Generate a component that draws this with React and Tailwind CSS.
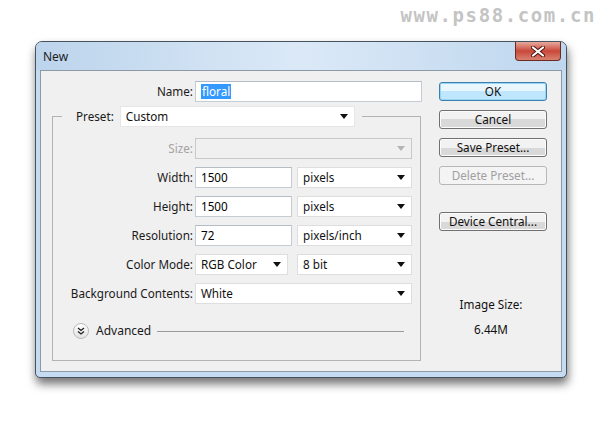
import React from 'react'

const FONT = "font-['Noto_Sans','Liberation_Sans',sans-serif]"

function Arrow({ disabled }) {
  return (
    <svg width="8" height="5" viewBox="0 0 8 5" aria-hidden>
      <path d="M0 0h8L4 5z" fill={disabled ? '#b4b4b4' : '#111'} />
    </svg>
  )
}

function Select({ value, className = '', disabled }) {
  return (
    <div
      className={[
        'flex h-[21px] items-center justify-between pl-[5px] pr-[6px]',
        disabled ? 'border border-[#c9c9c9] bg-[#f0f0f0]' : 'border border-[#dedede] bg-white',
        className,
      ].join(' ')}
    >
      <span className="text-[#111]">{value}</span>
      <Arrow disabled={disabled} />
    </div>
  )
}

function TextBox({ value, className = '' }) {
  return (
    <div
      className={[
        'flex h-[21px] items-center border border-[#c6ccd3] border-t-[#b5bcc5] bg-white pl-[5px]',
        className,
      ].join(' ')}
    >
      {value}
    </div>
  )
}

function Row({ label, disabled, children }) {
  return (
    <div className="flex h-[21px] items-center">
      <span
        className={[
          'mr-[2px] w-[140px] text-right',
          disabled ? 'text-[#a3a3a3]' : 'text-[#1a1a1a]',
        ].join(' ')}
      >
        {label}
      </span>
      {children}
    </div>
  )
}

function Button({ children, primary, disabled, className = '' }) {
  return (
    <div
      className={[
        'flex h-[19px] w-[108px] items-center justify-center rounded-[3px] border',
        primary
          ? 'border-[#3c7fb1] bg-gradient-to-b from-[#eaf6fd] from-50% to-[#bee6fd] to-50% shadow-[inset_0_0_0_1px_#97d5f3]'
          : disabled
            ? 'border-[#b5b8bb] bg-[#f4f4f4] text-[#a0a0a0]'
            : 'border-[#707070] bg-gradient-to-b from-[#f2f2f2] from-50% to-[#d9d9d9] to-50% shadow-[inset_0_0_0_1px_#fcfcfc]',
        className,
      ].join(' ')}
    >
      {children}
    </div>
  )
}

export default function App() {
  return (
    <div className={`h-[428px] w-[600px] overflow-hidden bg-white text-[11.7px] ${FONT}`}>
      <div className="flex h-[41px] justify-end pr-[4px] pt-[5px]">
        <span className="font-['DejaVu_Sans_Mono',monospace] text-[19px] font-bold leading-[20px] tracking-[1.6px] text-[#c4c4c4]">
          www.ps88.com.cn
        </span>
      </div>

      <div className="ml-[35px] flex h-[337px] w-[532px] flex-col rounded-t-[7px] rounded-b-[5px] border border-[#46525e] bg-[#c4dbf1] shadow-[1px_6px_10px_rgba(0,0,0,0.55)]">
        <div className="flex h-[28px] items-start justify-between rounded-t-[6px] bg-gradient-to-r from-[#bcd4ec] via-[#dbe9f7] to-[#bed6ee]">
          <span className="pl-[7px] pt-[6px] text-[12px] text-[#1e1e1e]">New</span>
          <div className="mr-[5px] flex h-[19px] w-[46px] items-center justify-center rounded-b-[4px] border border-t-0 border-[#6b2a22] bg-gradient-to-b from-[#e5a99d] via-[#c8473a] to-[#d8806f]">
            <svg width="14" height="11" viewBox="0 0 14 11" aria-hidden>
              <path d="M2 1.5l10 8M12 1.5l-10 8" stroke="#4a1510" strokeWidth="4" strokeLinecap="round" />
              <path d="M2 1.5l10 8M12 1.5l-10 8" stroke="#fff" strokeWidth="2.2" strokeLinecap="round" />
            </svg>
          </div>
        </div>

        <div className="mx-[4px] flex h-[302px] border border-[#8c9aa8] bg-[#f0f0f0]">
          <div className="flex w-[382px] flex-col pt-[10px]">
            <div className="flex h-[21px] items-center">
              <span className="mr-[2px] w-[152px] text-right text-[#1a1a1a]">Name:</span>
              <TextBox className="w-[227px]" value={<span className="bg-[#3399ff] px-px leading-[15px] text-white">floral</span>} />
            </div>

            <fieldset className="ml-[11px] mt-[4px] w-[369px] border border-[#b3b3b3] pt-[11px] pb-[21px]">
              <legend className="ml-[9px] flex h-[21px] items-center pl-[14px] pr-[7px]">
                <span className="mr-[6px] text-[#1a1a1a]">Preset:</span>
                <Select value="Custom" className="w-[235px] border-[#e6e6e6]" />
              </legend>

              <div className="flex flex-col gap-[8px]">
                <Row label="Size:" disabled>
                  <Select value="" disabled className="w-[217px]" />
                </Row>
                <Row label="Width:">
                  <TextBox className="w-[97px]" value="1500" />
                  <Select value="pixels" className="ml-[5px] w-[115px]" />
                </Row>
                <Row label="Height:">
                  <TextBox className="w-[97px]" value="1500" />
                  <Select value="pixels" className="ml-[5px] w-[115px]" />
                </Row>
                <Row label="Resolution:">
                  <TextBox className="w-[97px]" value="72" />
                  <Select value="pixels/inch" className="ml-[5px] w-[115px]" />
                </Row>
                <Row label="Color Mode:">
                  <Select value="RGB Color" className="w-[93px]" />
                  <Select value="8 bit" className="ml-[9px] w-[115px]" />
                </Row>
                <Row label="Background Contents:">
                  <Select value="White" className="w-[217px]" />
                </Row>
              </div>

              <div className="ml-[20px] mr-[16px] mt-[19px] flex h-[16px] items-center">
                <div className="flex h-[16px] w-[16px] items-center justify-center rounded-full border border-[#b9b9b9] bg-gradient-to-b from-white to-[#e2e2e2]">
                  <svg width="8" height="8" viewBox="0 0 8 8" aria-hidden>
                    <path d="M1 1l3 2.5L7 1M1 4.5L4 7l3-2.5" fill="none" stroke="#222" strokeWidth="1.3" />
                  </svg>
                </div>
                <span className="ml-[7px] text-[12px] text-[#1a1a1a]">Advanced</span>
                <div className="ml-[6px] h-px flex-1 bg-[#9a9a9a]" />
              </div>
            </fieldset>
          </div>

          <div className="ml-[16px] flex w-[108px] flex-col gap-[9px] pt-[11px] text-[#111]">
            <Button primary>OK</Button>
            <Button>Cancel</Button>
            <Button>Save Preset...</Button>
            <Button disabled>Delete Preset...</Button>
            <Button className="mt-[18px]">Device Central...</Button>
            <div className="mt-[56px] flex flex-col items-center pr-[4px] leading-[16px]">
              <span>Image Size:</span>
              <span className="mt-[9px]">6.44M</span>
            </div>
          </div>
        </div>
      </div>
    </div>
  )
}
